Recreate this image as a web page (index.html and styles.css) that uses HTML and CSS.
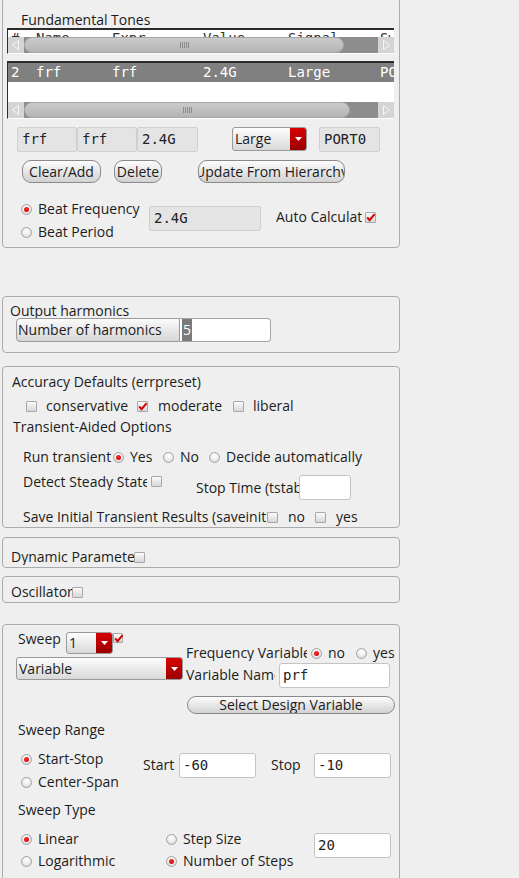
FILE: index.html
```html
<!DOCTYPE html>
<html>
<head>
<meta charset="utf-8">
<title>Fundamental Tones</title>
<link rel="stylesheet" href="styles.css">
</head>
<body>
<div class="page">

  <section class="panel p1">
    <div class="lbl t-fund">Fundamental Tones</div>
    <div class="tbl tbl1">
      <div class="thead mono"><span class="c1">#</span><span class="c2">Name</span><span class="c3">Expr</span><span class="c4">Value</span><span class="c5">Signal</span><span class="c6">Sweep</span></div>
      <div class="hsb">
        <div class="sbtn"><svg width="16" height="16" viewBox="0 0 16 16"><path d="M10.5 3.5 L4.5 8 L10.5 12.5 Z" fill="#d4d4d4" stroke="#f7f7f7"/></svg></div>
        <div class="track"><div class="handle hw1"><i class="grip"></i></div></div>
        <div class="sbtn"><svg width="16" height="16" viewBox="0 0 16 16"><path d="M5.5 3.5 L11.5 8 L5.5 12.5 Z" fill="#d4d4d4" stroke="#f7f7f7"/></svg></div>
      </div>
    </div>
    <div class="tbl tbl2">
      <div class="trow mono"><span class="c1">2</span><span class="c2">frf</span><span class="c3">frf</span><span class="c4">2.4G</span><span class="c5">Large</span><span class="c6">PORT0</span></div>
      <div class="tblank"></div>
      <div class="hsb">
        <div class="sbtn"><svg width="16" height="16" viewBox="0 0 16 16"><path d="M10.5 3.5 L4.5 8 L10.5 12.5 Z" fill="#d4d4d4" stroke="#f7f7f7"/></svg></div>
        <div class="track"><div class="handle hw2"><i class="grip"></i></div></div>
        <div class="sbtn"><svg width="16" height="16" viewBox="0 0 16 16"><path d="M5.5 3.5 L11.5 8 L5.5 12.5 Z" fill="#d4d4d4" stroke="#f7f7f7"/></svg></div>
      </div>
    </div>

    <div class="row fields">
      <div class="rofield mono w60">frf</div>
      <div class="rofield mono w60">frf</div>
      <div class="rofield mono w61">2.4G</div>
      <div class="combo cb-large"><span class="cv">Large</span><span class="carr"><svg width="7" height="4" viewBox="0 0 7 4"><path d="M0 0H7L3.5 4Z" fill="#fff"/></svg></span></div>
      <div class="rofield mono w61 port">PORT0</div>
    </div>

    <div class="row btnrow">
      <div class="btn b-clear">Clear/Add</div>
      <div class="btn b-del">Delete</div>
      <div class="btn b-upd">Update From Hierarchy</div>
    </div>

    <div class="row beatrow">
      <div class="radcol rc-beat">
        <div class="opt"><span class="radio on"></span><span>Beat Frequency</span></div>
        <div class="opt opt2"><span class="radio"></span><span>Beat Period</span></div>
      </div>
      <div class="rofield mono w112 beatval">2.4G</div>
      <div class="opt autocalc"><span class="lbl clip w86">Auto Calculate</span><span class="chk on ml3"><svg width="11" height="11" viewBox="0 0 11 11"><path d="M2.2 5.4 L4.6 8.2 L9.6 2.2" fill="none" stroke="#d40000" stroke-width="2"/></svg></span></div>
    </div>
  </section>

  <section class="panel p2">
    <div class="lbl oh-title">Output harmonics</div>
    <div class="row harmrow">
      <div class="nbtn">Number of harmonics</div>
      <div class="ninput"><span class="seltext">5</span></div>
    </div>
  </section>

  <section class="panel p3">
    <div class="lbl acc-title">Accuracy Defaults (errpreset)</div>
    <div class="row opt chkrow">
      <span class="chk"></span><span class="lbl ml9 w91">conservative</span>
      <span class="chk on"><svg width="11" height="11" viewBox="0 0 11 11"><path d="M2.2 5.4 L4.6 8.2 L9.6 2.2" fill="none" stroke="#d40000" stroke-width="2"/></svg></span><span class="lbl ml10 w75">moderate</span>
      <span class="chk"></span><span class="lbl ml9">liberal</span>
    </div>
    <div class="lbl tao-title">Transient-Aided Options</div>
    <div class="row opt runrow">
      <span class="lbl clip w89">Run transient</span>
      <span class="radio on ml1"></span><span class="lbl w33">Yes</span>
      <span class="radio"></span><span class="lbl w29">No</span>
      <span class="radio"></span><span class="lbl">Decide automatically</span>
    </div>
    <div class="row detrow">
      <span class="lbl clip w124">Detect Steady State</span>
      <span class="chk mt2 ml4"></span>
      <span class="lbl clip stoplbl">Stop Time (tstab)</span>
      <div class="input in-tstab"></div>
    </div>
    <div class="row opt saverow">
      <span class="lbl clip w244">Save Initial Transient Results (saveinit)</span>
      <span class="chk"></span><span class="lbl ml10 w27">no</span>
      <span class="chk"></span><span class="lbl ml10">yes</span>
    </div>
  </section>

  <section class="panel p4">
    <div class="row opt dynrow">
      <span class="lbl clip w123">Dynamic Parameter</span><span class="chk"></span>
    </div>
  </section>

  <section class="panel p5">
    <div class="row opt oscrow">
      <span class="lbl clip w61">Oscillator</span><span class="chk"></span>
    </div>
  </section>

  <section class="panel p6">
    <div class="row swtop">
      <div class="swleft">
        <div class="row swrow1">
          <span class="lbl sweeplbl">Sweep</span>
          <div class="combo cb-one"><span class="cv">1</span><span class="carr"><svg width="7" height="4" viewBox="0 0 7 4"><path d="M0 0H7L3.5 4Z" fill="#fff"/></svg></span></div>
          <span class="chk small on"><svg width="11" height="11" viewBox="0 0 11 11"><path d="M2.2 5.4 L4.6 8.2 L9.6 2.2" fill="none" stroke="#d40000" stroke-width="2"/></svg></span>
        </div>
        <div class="combo cb-var"><span class="cv">Variable</span><span class="carr"><svg width="7" height="4" viewBox="0 0 7 4"><path d="M0 0H7L3.5 4Z" fill="#fff"/></svg></span></div>
      </div>
      <div class="swright">
        <div class="row opt fvrow">
          <span class="lbl clip w121">Frequency Variable</span>
          <span class="radio on ml4"></span><span class="lbl w28">no</span>
          <span class="radio"></span><span class="lbl">yes</span>
        </div>
        <div class="row vnrow">
          <span class="lbl clip w89 mt4">Variable Name</span>
          <div class="input mono in-prf ml4">prf</div>
        </div>
        <div class="btn b-sel">Select Design Variable</div>
      </div>
    </div>

    <div class="lbl sec-title sr-title">Sweep Range</div>
    <div class="row startrow">
      <div class="radcol rc-range">
        <div class="opt"><span class="radio on"></span><span>Start-Stop</span></div>
        <div class="opt opt2"><span class="radio"></span><span>Center-Span</span></div>
      </div>
      <span class="lbl mt6 w36">Start</span>
      <div class="input mono in-num mt2">-60</div>
      <span class="lbl mt6 stoplbl2">Stop</span>
      <div class="input mono in-num mt2">-10</div>
    </div>

    <div class="lbl sec-title st-title">Sweep Type</div>
    <div class="row linrow">
      <div class="radcol rc-lin">
        <div class="opt"><span class="radio on"></span><span>Linear</span></div>
        <div class="opt opt3"><span class="radio"></span><span>Logarithmic</span></div>
      </div>
      <div class="radcol rc-step">
        <div class="opt"><span class="radio"></span><span>Step Size</span></div>
        <div class="opt opt3"><span class="radio on"></span><span>Number of Steps</span></div>
      </div>
      <div class="input mono in-num mt2">20</div>
    </div>
  </section>

</div>
</body>
</html>
```

FILE: styles.css
```css
html, body {
  margin: 0;
  height: 878px;
  overflow: hidden;
}
body {
  background: #efefef;
  font-family: "Open Sans", "Noto Sans", sans-serif;
  font-size: 14px;
  line-height: 16px;
  color: #1c1c1c;
}
.page {
  padding-left: 2px;
}
.panel {
  box-sizing: border-box;
  width: 398px;
  border: 1px solid #ababab;
  border-radius: 4px;
}
.p1 { margin-top: -3px; height: 251px; }
.p2 { margin-top: 48px; height: 57px; }
.p3 { margin-top: 13px; height: 162px; }
.p4 { margin-top: 9px; height: 31px; }
.p5 { margin-top: 8px; height: 27px; }
.p6 { margin-top: 21px; height: 280px; }

.row { display: flex; align-items: flex-start; }
.lbl {
  flex: none;
  display: block;
  white-space: nowrap;
  height: 16px;
}
.lbl.clip { overflow: hidden; }
.mono {
  font-family: "DejaVu Sans Mono", monospace;
  font-size: 14px;
}

/* generic widths / margins */
.w27 { width: 27px; } .w28 { width: 28px; } .w29 { width: 29px; }
.w33 { width: 33px; } .w36 { width: 36px; } .w60 { width: 60px; }
.w61 { width: 61px; } .w75 { width: 75px; } .w86 { width: 86px; }
.w89 { width: 89px; } .w91 { width: 91px; } .w93 { width: 93px; }
.w112 { width: 112px; } .w121 { width: 121px; } .w123 { width: 123px; }
.w124 { width: 124px; } .w244 { width: 244px; }
.ml1 { margin-left: 1px; } .ml2 { margin-left: 2px; } .ml3 { margin-left: 3px; }
.ml4 { margin-left: 4px; } .ml9 { margin-left: 9px; } .ml10 { margin-left: 10px; }
.mt2 { margin-top: 2px; } .mt4 { margin-top: 4px; } .mt6 { margin-top: 6px; }

/* option rows */
.opt { display: flex; align-items: center; height: 16px; white-space: nowrap; }
.radio {
  flex: none;
  box-sizing: border-box;
  width: 11px;
  height: 11px;
  border-radius: 50%;
  border: 1px solid #a2a2a2;
  background: radial-gradient(circle at 50% 35%, #ffffff 0, #f2f2f2 40%, #cfcfcf 100%);
  margin-right: 6px;
  position: relative;
}
.radio.on::after {
  content: "";
  position: absolute;
  left: 2px;
  top: 2px;
  width: 5px;
  height: 5px;
  border-radius: 50%;
  background: radial-gradient(circle at 40% 35%, #ff2a2a, #c80000);
}
.chk {
  flex: none;
  box-sizing: border-box;
  width: 11px;
  height: 11px;
  border: 1px solid #a8a8a8;
  border-radius: 1px;
  background: linear-gradient(#fbfbfb, #d6d6d6);
  position: relative;
}
.chk svg { position: absolute; left: -1px; top: -1px; }
.chk.small { width: 10px; height: 10px; margin-top: 2px; }

/* panel 1 */
.t-fund { margin: 14px 0 0 18px; }
.tbl {
  box-sizing: border-box;
  margin-left: 4px;
  width: 387px;
  border-left: 1px solid #2b2b2b;
  border-top: 2px solid #2b2b2b;
  border-bottom: 1px solid #ffffff;
  background: #fff;
  overflow: hidden;
}
.tbl1 { height: 26px; }
.tbl2 { height: 58px; margin-top: 7px; }
.thead {
  display: flex;
  height: 7px;
  overflow: hidden;
  line-height: 16px;
  color: #333;
  white-space: nowrap;
}
.trow {
  display: flex;
  height: 19px;
  line-height: 19px;
  background: #808080;
  color: #fff;
  white-space: nowrap;
  overflow: hidden;
}
.c1, .c2, .c3, .c4, .c5, .c6 { flex: none; box-sizing: border-box; padding-left: 3px; }
.c1 { width: 25px; }
.c2 { width: 76px; }
.c3 { width: 91px; }
.c4 { width: 85px; }
.c5 { width: 92px; }
.c6 { width: 17px; overflow: hidden; }
.tblank { height: 20px; }
.hsb { display: flex; height: 16px; }
.sbtn { flex: none; width: 16px; height: 16px; background: #d4d4d4; }
.sbtn svg { display: block; }
.track { flex: none; width: 354px; height: 16px; background: #8d8d8d; display: flex; }
.handle {
  box-sizing: border-box;
  height: 16px;
  border: 1px solid #a6a6a6;
  border-radius: 8px;
  background: linear-gradient(#cbcbcb, #b4b4b4);
  display: flex;
  align-items: center;
  justify-content: center;
}
.hw1 { width: 320px; }
.hw2 { width: 326px; }
.grip {
  width: 9px;
  height: 6px;
  background: repeating-linear-gradient(90deg, #8c8c8c 0 1px, transparent 1px 2px);
}

.fields { margin: 8px 0 0 14px; }
.rofield {
  flex: none;
  box-sizing: border-box;
  height: 25px;
  line-height: 23px;
  background: #e4e4e4;
  border: 1px solid #d0d0d0;
  border-radius: 2px;
  padding-left: 4px;
  white-space: nowrap;
  overflow: hidden;
  color: #222;
}
.port { margin-left: 12px; }

.combo {
  flex: none;
  box-sizing: border-box;
  display: flex;
  border: 1px solid #9a9a9a;
  border-radius: 3px;
  background: linear-gradient(#fdfdfd, #d9d9d9);
  overflow: hidden;
}
.combo .cv { flex: 1; padding-left: 2px; white-space: nowrap; overflow: hidden; }
.combo .carr {
  flex: none;
  width: 16px;
  background: linear-gradient(#d80000, #9a0000);
  display: flex;
  align-items: center;
  justify-content: center;
}
.combo .carr svg { display: block; }
.cb-large { margin-left: 34px; width: 75px; height: 24px; line-height: 22px; }
.cb-one { margin-top: 1px; width: 47px; height: 22px; line-height: 20px; }
.cb-var { margin-top: 3px; width: 167px; height: 23px; line-height: 21px; }

.btnrow { margin: 8px 0 0 19px; }
.btn {
  flex: none;
  box-sizing: border-box;
  height: 23px;
  border: 1px solid #8a8a8a;
  border-radius: 9px;
  background: linear-gradient(#fcfcfc, #d2d2d2);
  display: flex;
  align-items: center;
  justify-content: center;
  white-space: nowrap;
  overflow: hidden;
}
.b-clear { width: 79px; }
.b-del { margin-left: 13px; width: 48px; }
.b-upd { margin-left: 36px; width: 147px; }

.beatrow { margin-top: 18px; }
.radcol { flex: none; }
.rc-beat { margin-left: 18px; width: 128px; }
.opt2 { margin-top: 7px; }
.opt3 { margin-top: 6px; }
.beatval { margin-top: 5px; }
.autocalc { margin: 8px 0 0 15px; }

/* panel 2 */
.oh-title { margin: 6px 0 0 7px; height: 15px; line-height: 15px; }
.harmrow { margin-left: 13px; }
.nbtn {
  flex: none;
  box-sizing: border-box;
  width: 164px;
  height: 24px;
  line-height: 22px;
  padding-left: 1px;
  border: 1px solid #9a9a9a;
  border-radius: 4px 0 0 4px;
  background: linear-gradient(#fbfbfb, #d6d6d6);
  white-space: nowrap;
}
.ninput {
  flex: none;
  box-sizing: border-box;
  width: 91px;
  height: 24px;
  padding: 0 0 0 1px;
  border: 1px solid #a5a5a5;
  border-left: none;
  border-radius: 0 4px 4px 0;
  background: #fff;
  display: flex;
}
.seltext {
  display: block;
  width: 10px;
  height: 22px;
  line-height: 22px;
  text-align: center;
  background: #7a7a7a;
  color: #fff;
  margin-left: 1px;
}

/* panel 3 */
.acc-title { margin: 7px 0 0 9px; }
.chkrow { margin: 8px 0 0 23px; }
.tao-title { margin: 5px 0 0 10px; }
.runrow { margin: 14px 0 0 20px; }
.detrow { margin: 9px 0 0 20px; }
.stoplbl { margin: 6px 0 0 34px; width: 103px; }
.input {
  flex: none;
  box-sizing: border-box;
  height: 25px;
  line-height: 23px;
  padding-left: 3px;
  background: #fff;
  border: 1px solid #c4c4c4;
  border-radius: 3px;
  white-space: nowrap;
  overflow: hidden;
  color: #222;
}
.in-tstab { margin-top: 1px; width: 52px; }
.saverow { margin: 9px 0 0 20px; }

/* panel 4, 5 */
.dynrow { margin: 11px 0 0 8px; }
.oscrow { margin: 7px 0 0 8px; }

/* panel 6 */
.swtop { margin-top: 6px; }
.swleft { flex: none; margin-left: 13px; width: 167px; }
.swrow1 { height: 23px; }
.sweeplbl { margin-left: 2px; width: 48px; }
.swright { flex: none; margin-left: 3px; }
.fvrow { margin-top: 14px; }
.vnrow { margin-top: 2px; }
.in-prf { width: 111px; }
.b-sel { margin: 8px 0 0 1px; width: 208px; height: 18px; }
.sec-title { margin-left: 15px; }
.sr-title { margin-top: 8px; }
.startrow { margin-top: 13px; }
.rc-range { margin-left: 18px; width: 122px; }
.in-num { width: 77px; }
.stoplbl2 { margin-left: 15px; width: 43px; }
.st-title { margin-top: 12px; }
.linrow { margin-top: 13px; }
.rc-lin { margin-left: 18px; width: 145px; }
.rc-step { width: 148px; }
```
